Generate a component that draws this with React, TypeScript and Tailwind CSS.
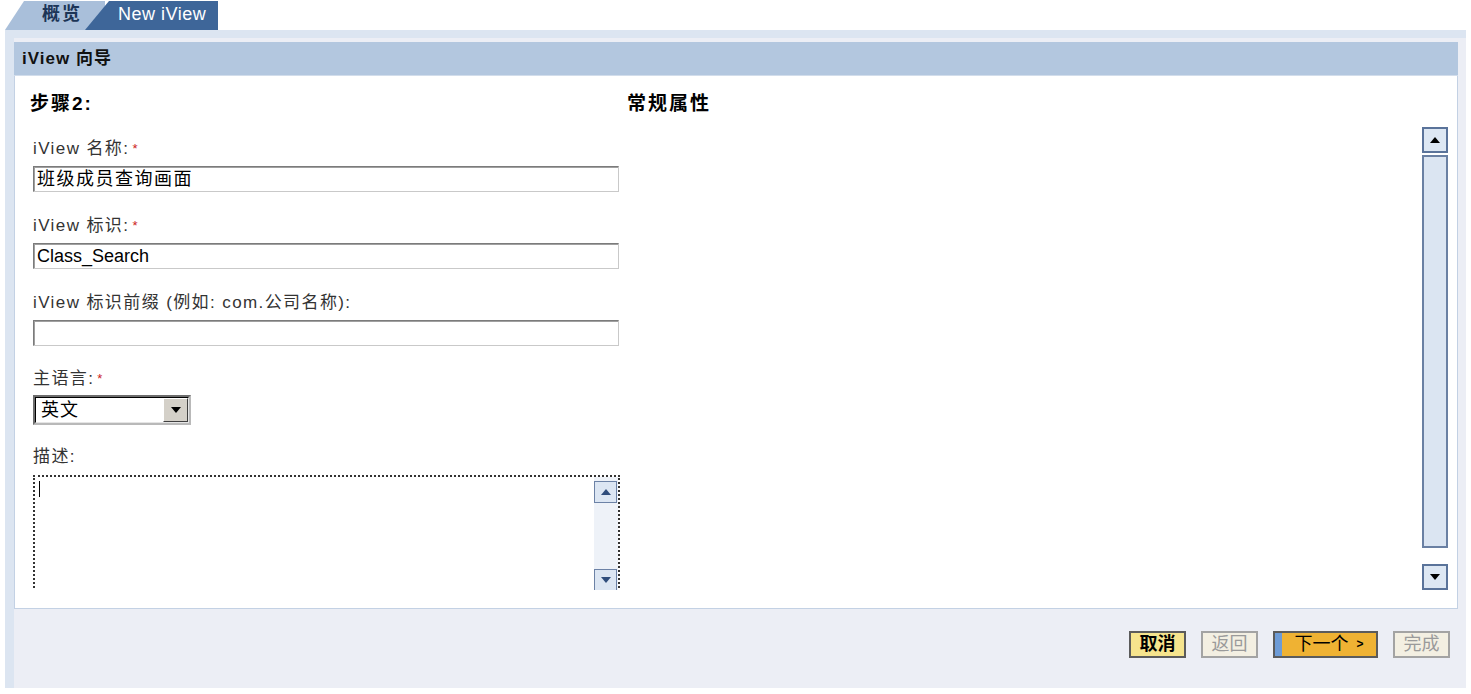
import React from 'react';

const sans = "font-['Liberation_Sans','Noto_Sans_CJK_SC',sans-serif]";

function Arrow({ dir, color = '#000' }: { dir: 'up' | 'down'; color?: string }) {
  return (
    <svg width="10" height="6" viewBox="0 0 10 6">
      {dir === 'up' ? (
        <polygon points="0,6 10,6 5,0" fill={color} />
      ) : (
        <polygon points="0,0 10,0 5,6" fill={color} />
      )}
    </svg>
  );
}

function Label({ text, required }: { text: string; required?: boolean }) {
  return (
    <div className="h-[20px] leading-[20px] text-[17px] tracking-[1.4px] text-[#333] whitespace-nowrap">
      {text}
      {required && <span className="ml-[3px] text-[13px] text-[#cc2222] align-top">*</span>}
    </div>
  );
}

function TextInput({ value, wide }: { value?: string; wide?: boolean }) {
  return (
    <div
      className={`mt-[7px] w-[586px] h-[26px] bg-white border border-t-[#7b7b7b] border-l-[#7b7b7b] border-r-[#c9c9c9] border-b-[#c9c9c9] shadow-[inset_1px_1px_0_#a0a0a0] px-[3px] text-[18px] leading-[24px] text-black ${
        wide ? 'tracking-[1.5px]' : ''
      }`}
    >
      {value}
    </div>
  );
}

export default function App() {
  return (
    <div className={`w-[1471px] h-[694px] overflow-hidden bg-white ${sans}`}>
      {/* tabs */}
      <div className="h-[30px] flex items-end pl-[5px]">
        <div className="w-[100px] h-[29px] bg-[#a9bfda] [clip-path:polygon(19px_0,100%_0,100%_100%,0_100%)] pl-[37px] text-[18px] tracking-[2px] leading-[27px] font-bold text-[#1c3557]">
          概览
        </div>
        <div className="-ml-[20px] w-[133px] h-[29px] bg-[#3e6699] [clip-path:polygon(24px_0,100%_0,100%_100%,0_100%)] pl-[33px] text-[18px] tracking-[0.5px] leading-[27px] text-white">
          New iView
        </div>
      </div>

      {/* outer panel */}
      <div className="ml-[5px] w-[1461px] h-[658px] bg-[#eceef5] border-l-[9px] border-t-[8px] border-[#dce5f1] pt-[4px] pr-[8px] flex flex-col">
        <div className="h-[34px] shrink-0 bg-[#b3c7df] border-b border-[#d2ddeb] pl-[8px] text-[17px] tracking-[1px] leading-[33px] font-bold text-[#111]">
          iView 向导
        </div>
        <div className="h-[533px] shrink-0 bg-white border border-t-0 border-[#c3d1e4] flex flex-col">
          <div className="pt-[17px] h-[51px] shrink-0 flex text-[19px] tracking-[2px] leading-[22px] font-bold text-black">
            <div className="pl-[15px] w-[612px]">步骤2:</div>
            <div>常规属性</div>
          </div>
          <div className="flex h-[463px] shrink-0 overflow-hidden">
            <div className="flex-1 pl-[18px] pt-[12px]">
              <Label text="iView 名称:" required />
              <TextInput value="班级成员查询画面" wide />
              <div className="h-[24px]" />
              <Label text="iView 标识:" required />
              <TextInput value="Class_Search" />
              <div className="h-[24px]" />
              <Label text="iView 标识前缀 (例如: com.公司名称):" />
              <TextInput />
              <div className="h-[23px]" />
              <Label text="主语言:" required />
              <div className="mt-[6px] w-[158px] h-[30px] flex items-center border-2 border-t-[#6d6d6d] border-l-[#6d6d6d] border-r-[#b9b9b9] border-b-[#b9b9b9] bg-white">
                <div className="flex-1 h-full border border-t-black border-l-black border-r-[#e5e5e5] border-b-[#e5e5e5] pl-[5px] text-[18px] tracking-[1px] leading-[24px] text-black flex">
                  <span className="flex-1">英文</span>
                  <div className="w-[25px] h-full bg-[#d4d0c8] border border-t-white border-l-white border-r-[#404040] border-b-[#404040] flex items-center justify-center">
                    <Arrow dir="down" />
                  </div>
                </div>
              </div>
              <div className="h-[22px]" />
              <Label text="描述:" />
              <div className="mt-[8px] w-[587px] h-[140px] border-2 border-dotted border-[#333] bg-white flex">
                <div className="flex-1 pl-[4px] pt-[4px]">
                  <div className="w-px h-[16px] bg-black" />
                </div>
                <div className="w-[24px] bg-[#eef2f8] flex flex-col justify-between pt-[4px] pb-[22px] pr-[1px]">
                  <div className="h-[22px] bg-[#dce6f3] border border-[#6c82a6] flex items-center justify-center">
                    <Arrow dir="up" color="#2f4d7c" />
                  </div>
                  <div className="h-[22px] bg-[#dce6f3] border border-[#6c82a6] flex items-center justify-center">
                    <Arrow dir="down" color="#2f4d7c" />
                  </div>
                </div>
              </div>
            </div>
            {/* panel scrollbar */}
            <div className="w-[26px] mr-[9px] flex flex-col">
              <div className="h-[26px] bg-[#dde7f3] border-2 border-[#5a739a] flex items-center justify-center">
                <Arrow dir="up" />
              </div>
              <div className="mt-[2px] h-[394px] bg-[#dbe5f2] border-2 border-[#6a80a3]" />
              <div className="mt-[16px] h-[26px] bg-[#dde7f3] border-2 border-[#5a739a] flex items-center justify-center">
                <Arrow dir="down" />
              </div>
            </div>
          </div>
        </div>

        {/* buttons */}
        <div className="pt-[22px] pr-[8px] flex justify-end gap-[15px] text-[18px] leading-[23px]">
          <div className="w-[57px] h-[27px] bg-[#f6e48d] border-2 border-[#5b5b5b] text-center text-black font-bold">取消</div>
          <div className="w-[57px] h-[27px] bg-[#f3efe2] border-2 border-[#a3a3a3] text-center text-[#9a9a9a]">返回</div>
          <div className="w-[105px] h-[27px] bg-[#efb233] border-2 border-[#5b5b5b] flex text-black">
            <div className="w-[7px] h-full bg-[#6d9bd6]" />
            <div className="flex-1 flex items-center justify-center gap-[8px]">
              <span>下一个</span>
              <span className="text-[12px] font-bold">&gt;</span>
            </div>
          </div>
          <div className="w-[57px] h-[27px] bg-[#f3efe2] border-2 border-[#a3a3a3] text-center text-[#9a9a9a]">完成</div>
        </div>
      </div>
    </div>
  );
}
